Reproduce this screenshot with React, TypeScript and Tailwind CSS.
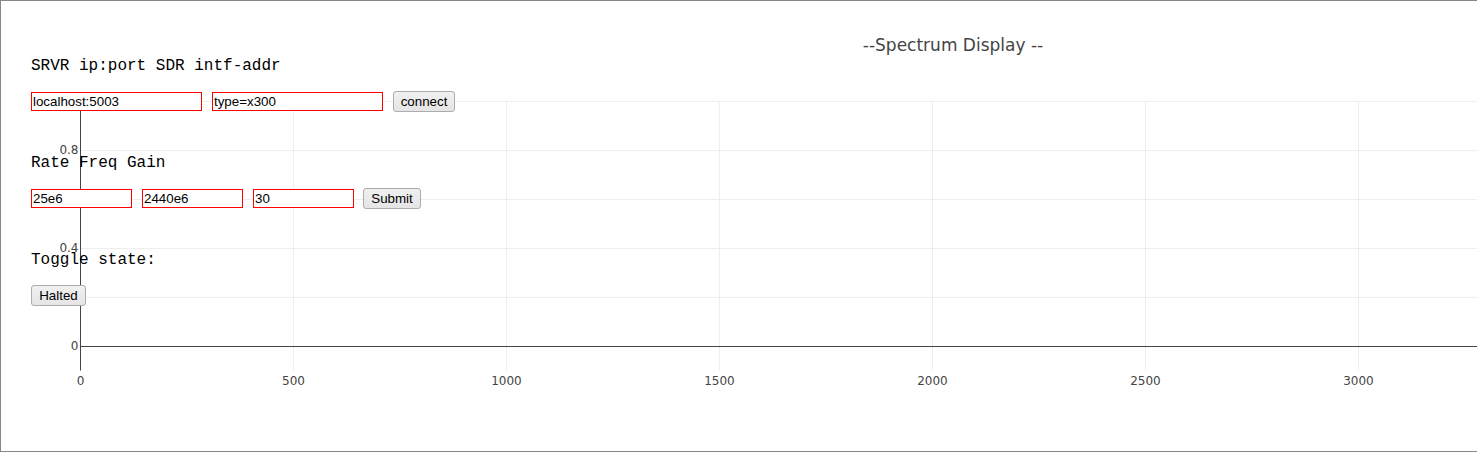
import React from "react";

const xTicks = [0, 500, 1000, 1500, 2000, 2500, 3000];
const yTicks = [
  { v: "1", y: 101 },
  { v: "0.8", y: 150 },
  { v: "0.6", y: 199 },
  { v: "0.4", y: 248 },
  { v: "0.2", y: 297 },
];

const Field = ({ value, w }: { value: string; w: string }) => (
  <input
    readOnly
    value={value}
    className={`${w} h-[19px] border border-[#ff0000] bg-white pl-[1px] text-[13.33px] text-black outline-none [font-family:'Liberation_Sans',Arial,sans-serif]`}
  />
);

const Btn = ({ label, w }: { label: string; w: string }) => (
  <button
    className={`${w} h-[21px] rounded-[3px] border border-[#acacac] bg-linear-to-b from-[#f0f0f0] to-[#e5e5e5] text-center text-[13.33px] leading-[19px] text-black [font-family:'Liberation_Sans',Arial,sans-serif]`}
  >
    {label}
  </button>
);

const Label = ({ text }: { text: string }) => (
  <p className="h-[18px] text-[16px] leading-[18px] whitespace-pre text-black [font-family:'Liberation_Mono','Courier_New',monospace]">
    {text}
  </p>
);

const Chart = () => (
  <svg
    width={1598}
    height={450}
    viewBox="1 1 1598 450"
    className="block"
    fontFamily="'DejaVu Sans', Verdana, sans-serif"
  >
    <text x={953} y={51} fontSize={17} fill="#444" textAnchor="middle">
      --Spectrum Display --
    </text>
    {[1, 2, 3, 4, 5, 6, 7].map((i) => {
      const x = 80 + 213 * i + 0.5;
      return <line key={i} x1={x} x2={x} y1={101} y2={370.5} stroke="#eee" />;
    })}
    {yTicks.map((t) => (
      <line key={t.v} x1={80} x2={1600} y1={t.y + 0.5} y2={t.y + 0.5} stroke="#eee" />
    ))}
    <line x1={80} x2={1600} y1={346.5} y2={346.5} stroke="#444" />
    <line x1={80.5} x2={80.5} y1={101} y2={370.5} stroke="#444" />
    {[...yTicks, { v: "0", y: 346 }].map((t) => (
      <text key={t.v} x={78.5} y={t.y + 4.3} fontSize={12} fill="#444" textAnchor="end">
        {t.v}
      </text>
    ))}
    {xTicks.map((t, i) => (
      <text key={t} x={80.5 + 213 * i} y={384.5} fontSize={12} fill="#444" textAnchor="middle">
        {t}
      </text>
    ))}
  </svg>
);

export default function App() {
  return (
    <div className="h-screen w-screen overflow-hidden bg-white">
      <div className="relative h-[452px] w-[1600px] border border-[#888]">
        <Chart />
        <div className="absolute left-[30px] top-[56px] flex flex-col">
          <Label text="SRVR ip:port SDR intf-addr" />
          <div className="mt-[16px] flex h-[21px] items-center gap-[10px]">
            <Field value="localhost:5003" w="w-[171px]" />
            <Field value="type=x300" w="w-[171px]" />
            <Btn label="connect" w="w-[62px]" />
          </div>
          <div className="mt-[42px]">
            <Label text="Rate Freq Gain" />
          </div>
          <div className="mt-[16px] flex h-[21px] items-center gap-[10px]">
            <Field value="25e6" w="w-[101px]" />
            <Field value="2440e6" w="w-[101px]" />
            <Field value="30" w="w-[101px]" />
            <div className="-ml-[1px] flex">
              <Btn label="Submit" w="w-[58px]" />
            </div>
          </div>
          <div className="mt-[42px]">
            <Label text="Toggle state:" />
          </div>
          <div className="mt-[16px] flex h-[21px] items-center">
            <Btn label="Halted" w="w-[55px]" />
          </div>
        </div>
      </div>
    </div>
  );
}
